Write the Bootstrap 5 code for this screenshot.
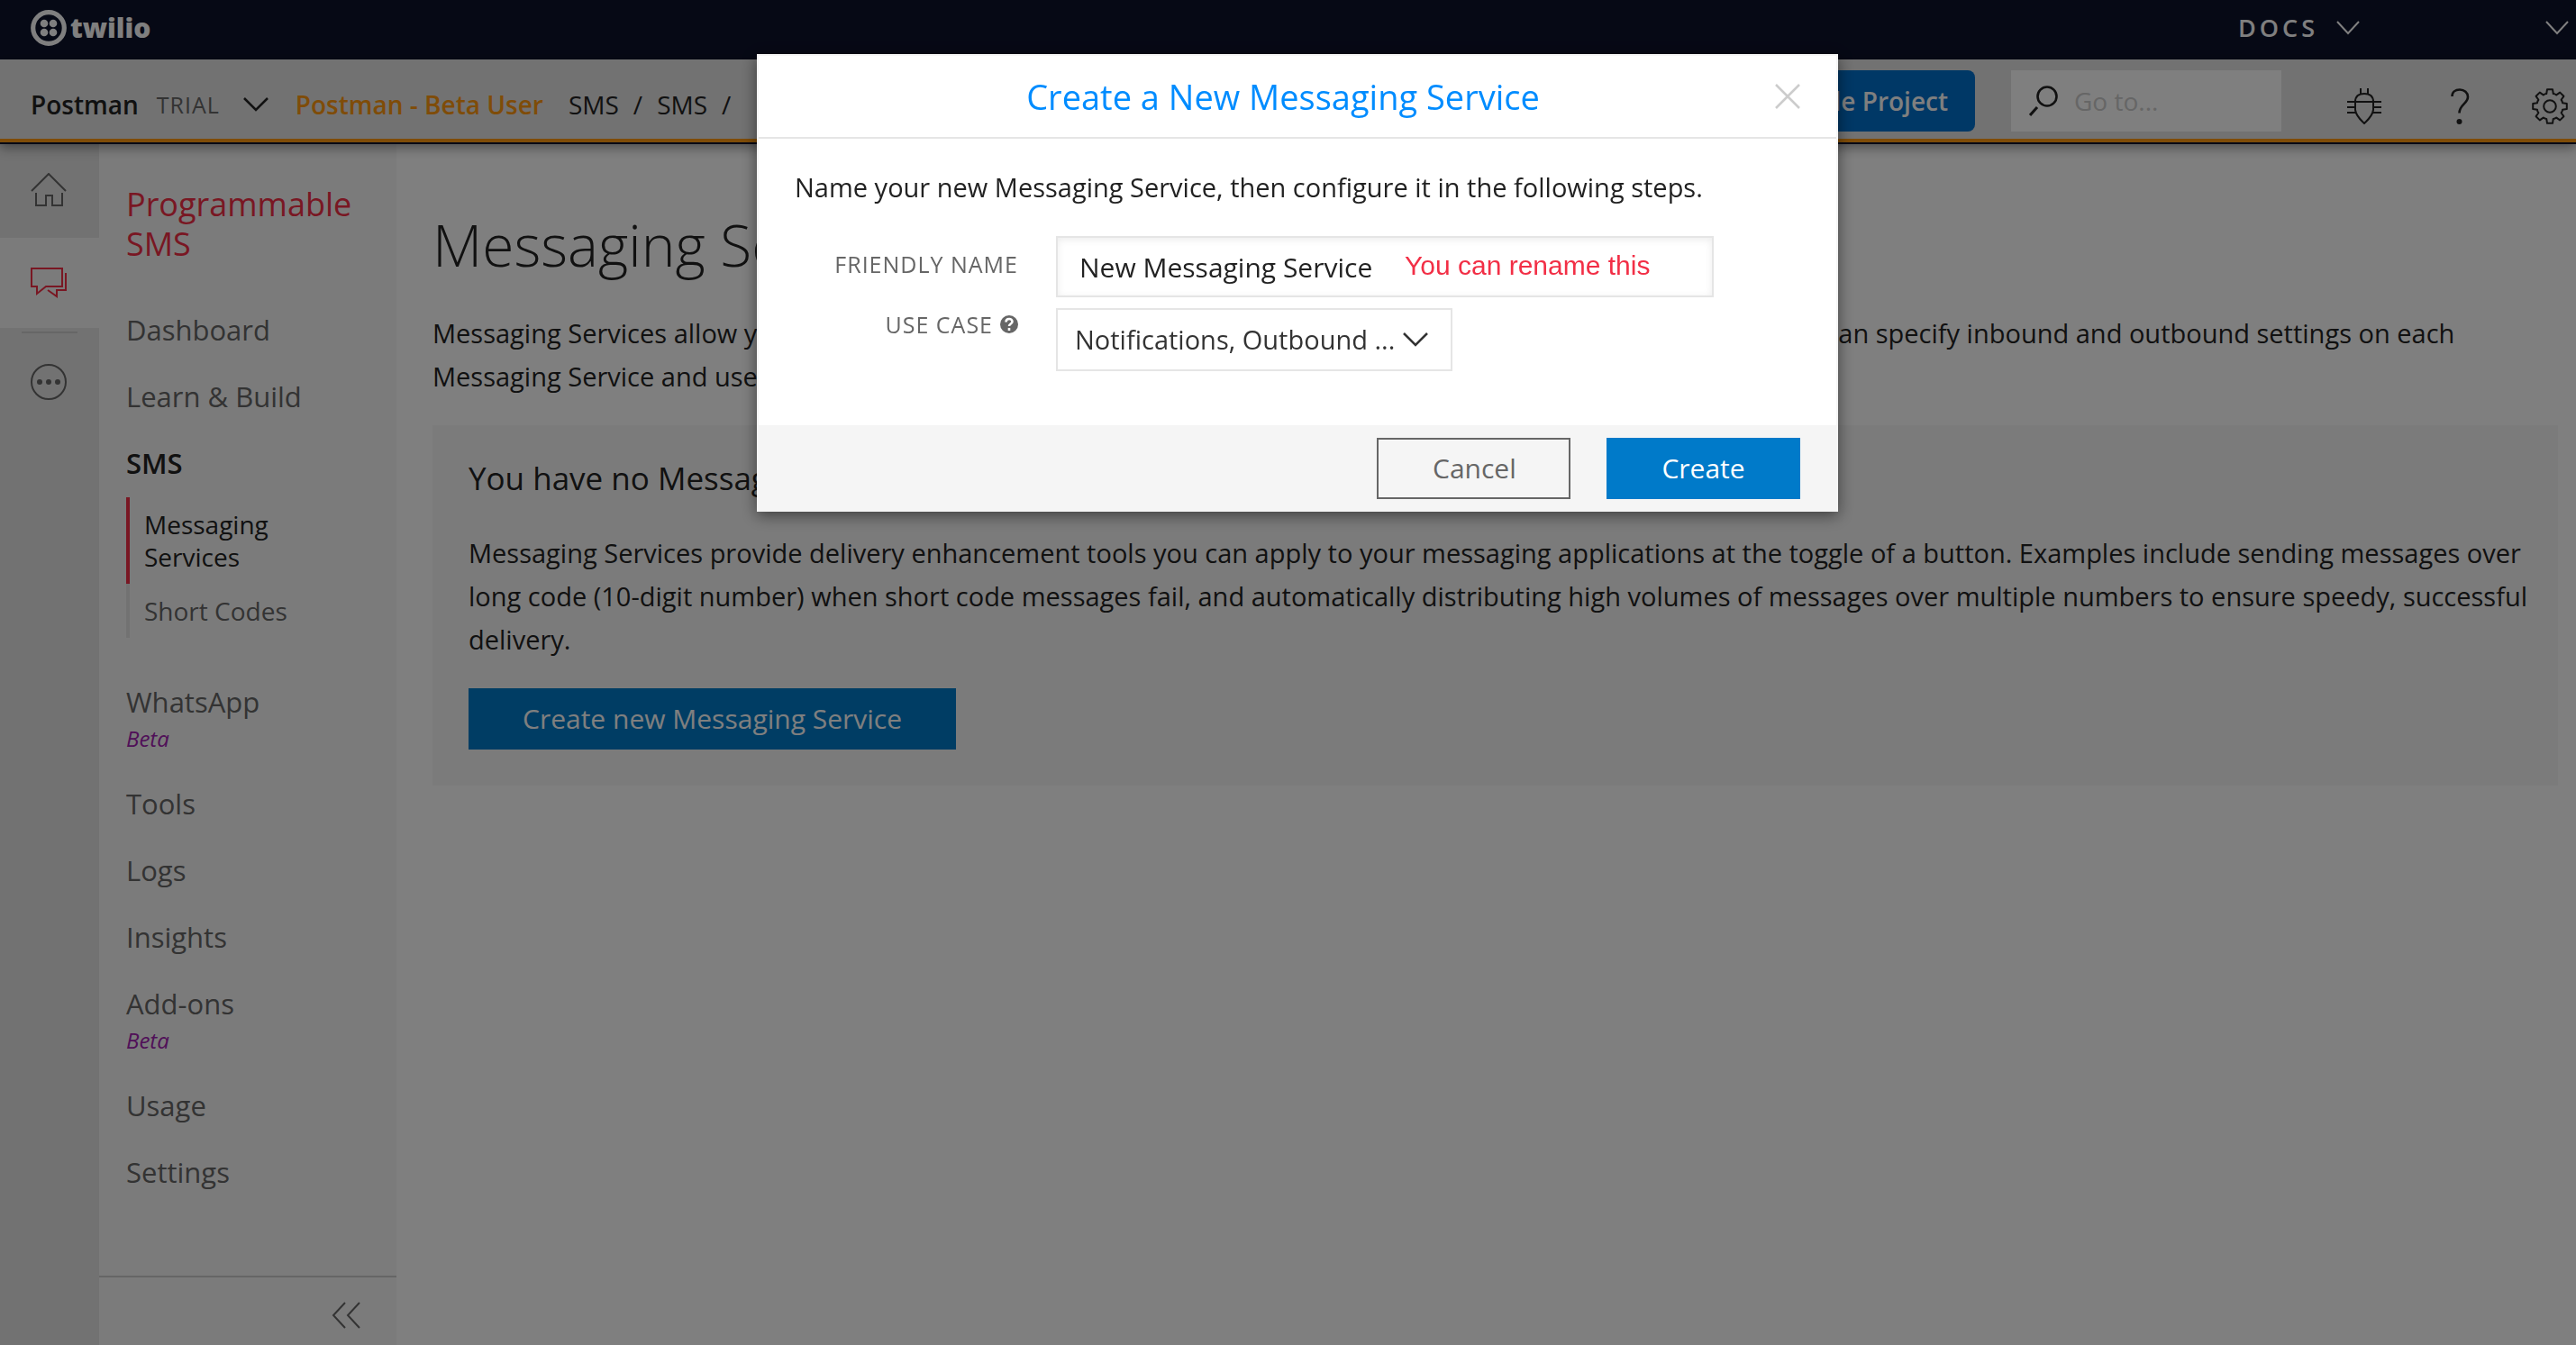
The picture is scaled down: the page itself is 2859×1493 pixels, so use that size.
<!DOCTYPE html>
<html lang="en">
<head>
<meta charset="utf-8">
<meta name="viewport" content="width=device-width, initial-scale=1">
<title>Messaging Services - Programmable SMS</title>
<link href="https://cdn.jsdelivr.net/npm/bootstrap@5.3.0/dist/css/bootstrap.min.css" rel="stylesheet">
<style>
  :root { --ink: #222; --muted: #666; --line: #e5e5e5; --brand-red: #f22f46; --brand-blue: #007ac9; }
  body { font-family: "Open Sans", "Noto Sans", sans-serif; font-size: 29px; line-height: 48px; color: var(--ink); background: #fff; }
  a { color: inherit; text-decoration: none; }
  svg { display: block; flex: none; fill: none; stroke: currentColor; stroke-width: 2; }
  .fill-shape { fill: currentColor; stroke: none; }

  /* top bars */
  .brand-bar { height: 66px; background: #0d122b; color: #fff; padding: 0 8px 4px 34px; }
  .brand-name { font-size: 30px; font-weight: 800; line-height: 40px; }
  .docs-link { font-size: 27px; font-weight: 600; letter-spacing: 4px; line-height: 36px; }
  .docs-group { gap: 20px; margin-right: 206px; }
  .project-bar { height: 94px; background: #e4e4e4; border-bottom: 2px solid #0d122b; box-shadow: 0 4px 12px rgba(0,0,0,.4); padding: 12px 9px 0 34px; position: relative; z-index: 1; }
  .project-bar::after { content: ""; position: absolute; left: 0; right: 0; bottom: 0; height: 4px; background: #ff9910; }
  .project-row { height: 76px; }
  .project-name { font-size: 28px; font-weight: 600; }
  .trial-tag { font-size: 25px; letter-spacing: 1px; color: var(--muted); margin: 0 26px 0 20px; }
  .beta-user { font-size: 28px; font-weight: 600; color: #ff9910; margin-left: 30px; margin-right: 28px; }
  .crumbs { font-size: 28px; gap: 16px; }
  .project-tools { margin-bottom: 8px; }
  .upgrade-btn { height: 68px; padding: 0 30px; font-size: 28px; font-weight: 600; background: #0070cc; border: 0; border-radius: 8px; color: #fff; }
  .go-box { width: 300px; height: 68px; background: #fff; margin-left: 40px; margin-right: 72px; padding-left: 20px; gap: 18px; }
  .go-box input { min-width: 0; font-size: 28px; padding: 0; border: 0; background: transparent; box-shadow: none; }
  .go-box input::placeholder { color: #ccc; }
  .tool-icons { gap: 63px; padding-top: 12px; }

  /* left rail and section navigation */
  .icon-rail { width: 110px; background: #e4e4e4; color: var(--muted); }
  .icon-rail a { height: 100px; padding-left: 34px; }
  .icon-rail .rail-home { height: 104px; }
  .icon-rail .rail-current { background: #f7f7f7; color: var(--brand-red); }
  .rail-rule { height: 2px; margin: 4px 24px 0; background: #ccc; }
  .side-nav { width: 330px; background: #f7f7f7; color: var(--muted); font-size: 31px; line-height: 34px; }
  .side-title { font-size: 36px; line-height: 44px; color: var(--brand-red); padding: 45px 30px 36px; margin: 0; font-weight: 400; }
  .side-link { display: block; padding: 20px 30px; }
  .side-link.current { color: var(--ink); font-weight: 600; }
  .beta-tag { display: block; font-size: 24px; line-height: 31px; margin-top: 8px; font-style: italic; color: #a020b0; }
  .sub-nav { margin: 1px 0 34px 30px; font-size: 28px; line-height: 36px; }
  .sub-nav a { display: block; padding: 12px 100px 12px 16px; border-left: 4px solid var(--line); white-space: nowrap; }
  .sub-nav a.current { color: var(--ink); font-weight: 500; border-color: var(--brand-red); white-space: normal; }
  .side-foot { height: 77px; border-top: 2px solid #ccc; padding-right: 40px; }

  /* main column */
  .main-col { padding: 72px 20px 0 40px; }
  .main-col h1 { font-size: 64px; line-height: 80px; font-weight: 300; margin-bottom: 34px; }
  .empty-panel { background: #f7f7f7; margin-top: 30px; padding: 36px 20px 40px 40px; }
  .empty-panel h2 { font-size: 35px; line-height: 46px; font-weight: 400; margin-bottom: 36px; }
  .empty-panel p { margin-bottom: 30px; }
  .flat-btn { height: 68px; font-size: 30px; line-height: 36px; border-radius: 0; padding: 0 60px; }
  .blue-btn, .blue-btn:hover { background: var(--brand-blue); color: #fff; border: 0; }
  .wide-btn { min-width: 540px; }

  /* dialog */
  .service-modal { padding-left: 21px; }
  .service-modal .modal-dialog { max-width: 1200px; margin: 60px auto; }
  .service-modal .modal-content { border: 2px solid #f5f5f5; border-radius: 0; color: var(--ink); box-shadow: 0 4px 16px rgba(0,0,0,.5); }
  .service-modal .modal-header { border-bottom: 2px solid var(--line); border-radius: 0; padding: 0 38px; height: 92px; }
  .service-modal .modal-title { font-size: 38px; line-height: 48px; font-weight: 400; color: #008cff; }
  .close-btn { color: #ccc; border: 0; background: none; padding: 0; }
  .service-modal .modal-body { padding: 30px 42px 60px 40px; }
  .form-line { padding-top: 30px; }
  .form-line + .form-line { padding-top: 12px; }
  .field-label { width: 248px; margin-right: 42px; font-size: 25px; line-height: 36px; letter-spacing: 1px; color: var(--muted); text-align: right; flex: none; }
  .name-label { padding-top: 13px; }
  .name-wrap { width: 730px; }
  .name-wrap input { height: 68px; font-size: 30px; padding: 0 24px; color: var(--ink); border: 2px solid var(--line); border-radius: 0; box-shadow: inset 0 2px 8px rgba(0,0,0,.08); }
  .rename-note { position: absolute; left: 387px; top: 15px; line-height: 36px; font-family: "Liberation Sans", sans-serif; font-size: 30px; color: #f22f46; pointer-events: none; }
  .case-select { width: 440px; height: 70px; font-size: 29px; padding: 0 60px 0 19px; border: 2px solid var(--line); border-radius: 0; color: #333; background-image: url("data:image/svg+xml,%3Csvg xmlns='http://www.w3.org/2000/svg' viewBox='0 0 28 16'%3E%3Cpath d='M1 1l13 13L27 1' fill='none' stroke='%23333' stroke-width='2.5'/%3E%3C/svg%3E"); background-size: 28px 16px; background-position: right 25px center; }
  .service-modal .modal-footer { background: #f5f5f5; border: 0; border-radius: 0; padding: 14px 40px 12px; gap: 40px; }
  .service-modal .modal-footer > * { margin: 0; width: 215px; }
  .cancel-btn { border: 2px solid var(--muted); color: var(--muted); }
</style>
</head>
<body class="d-flex flex-column min-vh-100">

<header>
  <div class="brand-bar d-flex align-items-center">
    <a href="#" class="d-flex align-items-center gap-1 me-auto" aria-label="twilio">
      <svg width="40" height="40" viewBox="0 0 40 40"><circle cx="20" cy="20" r="17.3" stroke-width="5.2"/><g class="fill-shape"><circle cx="15" cy="15" r="4.3"/><circle cx="25" cy="15" r="4.3"/><circle cx="15" cy="25" r="4.3"/><circle cx="25" cy="25" r="4.3"/></g></svg>
      <span class="brand-name">twilio</span>
    </a>
    <a href="#" class="docs-group d-flex align-items-center"><span class="docs-link">DOCS</span>
      <svg width="26" height="16" viewBox="0 0 26 16"><path d="M1 1l12 13L25 1"/></svg></a>
    <a href="#" aria-label="Account"><svg width="26" height="16" viewBox="0 0 26 16"><path d="M1 1l12 13L25 1"/></svg></a>
  </div>
  <div class="project-bar">
    <div class="project-row d-flex align-items-center">
      <a href="#" class="project-name">Postman</a>
      <span class="trial-tag">TRIAL</span>
      <svg width="28" height="16" viewBox="0 0 28 16"><path d="M1 1l13 13L27 1" stroke-width="2.5"/></svg>
      <a href="#" class="beta-user">Postman - Beta User</a>
      <nav class="crumbs d-flex me-auto"><a href="#">SMS</a><span>/</span><a href="#">SMS</a><span>/</span></nav>
      <div class="project-tools d-flex align-items-center">
        <button type="button" class="btn upgrade-btn">Upgrade Project</button>
        <label class="go-box d-flex align-items-center" aria-label="Go to">
          <svg width="32" height="34" viewBox="0 0 32 34" stroke="#000"><circle cx="20" cy="12" r="10.5" stroke-width="2.6"/><path d="M9 24L1 33" stroke-width="3"/></svg>
          <input type="text" class="form-control" placeholder="Go to...">
        </label>
        <div class="tool-icons d-flex">
          <a href="#" aria-label="Debugger"><svg width="40" height="40" viewBox="0 0 40 40"><path d="M16 0v6M24 0v6M1 15h38M1 21h9M30 21h9M1 27h9M30 27h9M10 15c0-7 4-9 10-9s10 2 10 9v9c-1 7-6 11-10 15c-4-4-9-8-10-15z"/></svg></a>
          <a href="#" aria-label="Help"><svg width="40" height="40" viewBox="0 0 40 40"><path d="M14.500 9C14.500 4 18 1.500 23 1.500S32 5 32 9.500C32 17 22.500 18 22.500 27.500" stroke-width="2.600"/><circle class="fill-shape" cx="22.500" cy="37" r="3"/></svg></a>
          <a href="#" aria-label="Settings"><svg width="40" height="40" viewBox="0 0 40 40" stroke-width="2.500" stroke-linejoin="round"><g transform="translate(20 20)"><circle r="6.800"/><path d="M-3-18.800H3L3.750-14Q5.600-14 7.250-12.600L11.200-15.400L15.400-11.200L12.600-7.250Q14-5.600 14-3.750L18.800-3V3L14 3.750Q14 5.600 12.600 7.250L15.400 11.200L11.200 15.400L7.250 12.600Q5.600 14 3.750 14L3 18.800H-3L-3.750 14Q-5.600 14-7.250 12.600L-11.200 15.400L-15.400 11.200L-12.600 7.250Q-14 5.600-14 3.750L-18.800 3V-3L-14-3.750Q-14-5.600-12.600-7.250L-15.400-11.200L-11.200-15.400L-7.250-12.600Q-5.600-14-3.750-14Z"/></g></svg></a>
        </div>
      </div>
    </div>
  </div>
</header>

<div class="d-flex flex-grow-1">
  <nav class="icon-rail flex-shrink-0" aria-label="Products">
    <a href="#" class="rail-home d-flex align-items-center" aria-label="Home"><svg width="40" height="40" viewBox="0 0 40 40"><path d="M1 20L20 1l19 19M6 22v14h11V25h7v11h11V22"/></svg></a>
    <a href="#" class="rail-current d-flex align-items-center" aria-label="Programmable SMS"><svg width="40" height="36" viewBox="0 0 40 36"><path d="M1 2h34v20H17L7 30v-8H1zM39 7v19H29v7L19 26"/></svg></a>
    <div class="rail-rule"></div>
    <a href="#" class="d-flex align-items-center pt-2" aria-label="All products"><svg width="40" height="40" viewBox="0 0 40 40"><circle cx="20" cy="20" r="19"/><g class="fill-shape"><circle cx="10" cy="20" r="3"/><circle cx="20" cy="20" r="3"/><circle cx="30" cy="20" r="3"/></g></svg></a>
  </nav>

  <nav class="side-nav flex-shrink-0 d-flex flex-column" aria-label="Programmable SMS">
    <h2 class="side-title">Programmable SMS</h2>
    <a href="#" class="side-link">Dashboard</a>
    <a href="#" class="side-link">Learn &amp; Build</a>
    <a href="#" class="side-link current">SMS</a>
    <div class="sub-nav">
      <a href="#" class="current">Messaging Services</a>
      <a href="#">Short Codes</a>
    </div>
    <a href="#" class="side-link">WhatsApp<span class="beta-tag">Beta</span></a>
    <a href="#" class="side-link">Tools</a>
    <a href="#" class="side-link">Logs</a>
    <a href="#" class="side-link">Insights</a>
    <a href="#" class="side-link">Add-ons<span class="beta-tag">Beta</span></a>
    <a href="#" class="side-link">Usage</a>
    <a href="#" class="side-link">Settings</a>
    <div class="side-foot mt-auto d-flex align-items-center justify-content-end pt-2">
      <a href="#" aria-label="Collapse"><svg width="32" height="30" viewBox="0 0 32 30"><path d="M15 1L2 15l13 14M31 1L18 15l13 14"/></svg></a>
    </div>
  </nav>

  <main class="main-col flex-grow-1">
    <h1>Messaging Services</h1>
    <p class="mb-0">Messaging Services allow you to organize your numbers, and configure a common behavior for your use case. You can specify inbound and outbound settings on each Messaging Service and use it across one or many phone numbers.</p>
    <section class="empty-panel">
      <h2>You have no Messaging Services</h2>
      <p>Messaging Services provide delivery enhancement tools you can apply to your messaging applications at the toggle of a button. Examples include sending messages over long code (10-digit number) when short code messages fail, and automatically distributing high volumes of messages over multiple numbers to ensure speedy, successful delivery.</p>
      <button type="button" class="btn flat-btn blue-btn wide-btn">Create new Messaging Service</button>
    </section>
  </main>
</div>

<div class="modal-backdrop show"></div>
<div class="modal service-modal d-block" tabindex="-1" role="dialog" aria-labelledby="dialog-title">
  <div class="modal-dialog">
    <form class="modal-content">
      <div class="modal-header">
        <h2 class="modal-title flex-grow-1 text-center" id="dialog-title">Create a New Messaging Service</h2>
        <button type="button" class="close-btn" aria-label="Close"><svg width="32" height="32" viewBox="0 0 32 32"><path d="M3 3l26 26M29 3L3 29" stroke-width="2.500"/></svg></button>
      </div>
      <div class="modal-body">
        <p class="mb-0">Name your new Messaging Service, then configure it in the following steps.</p>
        <div class="form-line d-flex align-items-start">
          <label class="field-label name-label" for="friendly">FRIENDLY NAME</label>
          <div class="name-wrap position-relative">
            <input type="text" class="form-control" id="friendly" value="New Messaging Service">
            <span class="rename-note">You can rename this</span>
          </div>
        </div>
        <div class="form-line d-flex align-items-start">
          <label class="field-label d-flex align-items-center justify-content-end gap-2" for="usecase">USE CASE
            <svg width="20" height="20" viewBox="0 0 20 20"><circle class="fill-shape" cx="10" cy="10" r="10"/><path d="M6.500 7.500c0-4.500 7-4.500 7-.5 0 2.500-3.500 2.500-3.500 5M10 14v3" stroke="#fff" stroke-width="2.600"/></svg></label>
          <select class="form-select case-select" id="usecase"><option>Notifications, Outbound ...</option></select>
        </div>
      </div>
      <div class="modal-footer">
        <button type="button" class="btn flat-btn cancel-btn">Cancel</button>
        <button type="submit" class="btn flat-btn blue-btn">Create</button>
      </div>
    </form>
  </div>
</div>
<script src="https://cdn.jsdelivr.net/npm/bootstrap@5.3.0/dist/js/bootstrap.bundle.min.js"></script>
</body>
</html>
